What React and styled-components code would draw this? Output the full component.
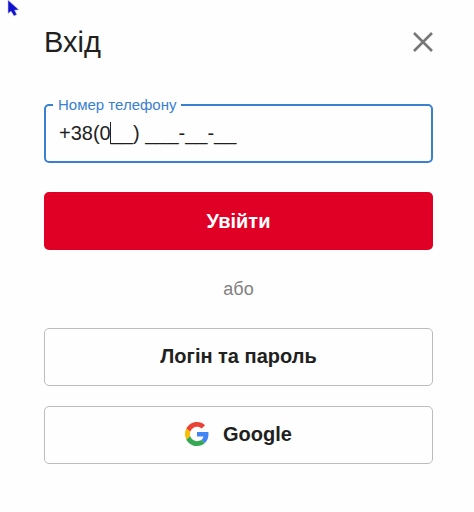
// react imports
import React, { useState } from 'react';
// styled components import
import styled, { createGlobalStyle } from 'styled-components';

// styled components
const GlobalStyle = createGlobalStyle`
  * {
    box-sizing: border-box;
  }

  body {
    margin: 0;
    background-color: #fefefe;
    color: #221f1f;
    font-family: "Liberation Sans", Arial, sans-serif;
  }
`

const LoginContainer = styled.main`
  display: flex;
  flex-flow: column nowrap;
  padding: 24px 41px 48px 44px;
`

const LoginHeader = styled.header`
  display: flex;
  justify-content: space-between;
  align-items: center;
  height: 36px;
  margin-bottom: 36px;
`

const LoginTitle = styled.h1`
  margin: 0;
  font-size: 29px;
  line-height: 36px;
  font-weight: normal;
`

const CloseButton = styled.button`
  display: flex;
  padding: 0;
  border: none;
  background: none;
  color: #777;
  cursor: pointer;
`

const LoginForm = styled.form`
  display: flex;
  flex-flow: column nowrap;
`

const PhoneField = styled.fieldset`
  min-width: 0;
  height: 67px;
  margin: 0 0 29px;
  padding: 0 13px;
  border: 2px solid #3a7fd0;
  border-radius: 5px;
`

const PhoneLegend = styled.legend`
  margin-left: -6px;
  padding: 0 5px;
  color: #3a7fd0;
  font-size: 15px;
  line-height: 18px;
`

const InputWrap = styled.div`
  position: relative;
`

const PhoneInput = styled.input`
  display: block;
  width: 100%;
  height: 38px;
  padding: 0;
  border: none;
  outline: none;
  background: none;
  color: inherit;
  font-family: inherit;
  font-size: 20px;
`

const Caret = styled.span`
  position: absolute;
  top: 8px;
  left: 51px;
  width: 1px;
  height: 22px;
  background-color: #221f1f;
`

const Button = styled.button`
  display: flex;
  justify-content: center;
  align-items: center;
  gap: 14px;
  width: 100%;
  height: 58px;
  padding: ${props => (props.$primary ? '0' : '0 0 2px')};
  border: ${props => (props.$primary ? 'none' : '1px solid #bcbcbc')};
  border-radius: 5px;
  background-color: ${props => (props.$primary ? '#e00025' : '#fefefe')};
  color: ${props => (props.$primary ? '#fff' : '#221f1f')};
  font-family: inherit;
  font-size: 20px;
  font-weight: bold;
  cursor: pointer;
`

const Divider = styled.p`
  margin: 29px 0;
  color: #808080;
  font-size: 18px;
  line-height: 20px;
  text-align: center;
`

const OtherLogins = styled.div`
  display: flex;
  flex-flow: column nowrap;
  gap: 20px;
`

const Pointer = styled.svg`
  position: absolute;
  top: 0;
  left: 7px;
  pointer-events: none;
`

const CloseIcon = () => (
    <svg width="20" height="20" viewBox="0 0 20 20" aria-hidden="true">
        <path d="M1 1L19 19M19 1L1 19" stroke="currentColor" strokeWidth="2.6" />
    </svg>
)

const GoogleIcon = () => (
    <svg width="24" height="24" viewBox="0 0 48 48" aria-hidden="true">
        <path fill="#EA4335" d="M24 9.5c3.54 0 6.71 1.22 9.21 3.6l6.85-6.85C35.9 2.38 30.47 0 24 0 14.62 0 6.51 5.38 2.56 13.22l7.98 6.19C12.43 13.72 17.74 9.5 24 9.5z" />
        <path fill="#4285F4" d="M46.98 24.55c0-1.57-.15-3.09-.38-4.55H24v9.02h12.94c-.58 2.96-2.26 5.48-4.78 7.18l7.73 6c4.51-4.18 7.09-10.36 7.09-17.65z" />
        <path fill="#FBBC05" d="M10.53 28.59c-.48-1.45-.76-2.99-.76-4.59s.27-3.14.76-4.59l-7.98-6.19C.92 16.46 0 20.12 0 24c0 3.88.92 7.54 2.56 10.78l7.97-6.19z" />
        <path fill="#34A853" d="M24 48c6.48 0 11.93-2.13 15.89-5.81l-7.73-6c-2.15 1.45-4.92 2.3-8.16 2.3-6.26 0-11.57-4.22-13.47-9.91l-7.98 6.19C6.51 42.62 14.62 48 24 48z" />
    </svg>
)

const App = () => {
    const [phone, setPhone] = useState('+38(0__) ___-__-__');

    const login = e => {
        e.preventDefault();
    }

    return (
        <>
            <GlobalStyle />
            <LoginContainer>
                <LoginHeader>
                    <LoginTitle>Вхід</LoginTitle>
                    <CloseButton type="button" aria-label="Закрити">
                        <CloseIcon />
                    </CloseButton>
                </LoginHeader>
                <LoginForm onSubmit={login}>
                    <PhoneField>
                        <PhoneLegend>
                            <label htmlFor="phone">Номер телефону</label>
                        </PhoneLegend>
                        <InputWrap>
                            <PhoneInput id="phone" name="phone" type="tel" value={phone} onChange={e => setPhone(e.target.value)} />
                            <Caret />
                        </InputWrap>
                    </PhoneField>
                    <Button type="submit" $primary>Увійти</Button>
                </LoginForm>
                <Divider>або</Divider>
                <OtherLogins>
                    <Button type="button">Логін та пароль</Button>
                    <Button type="button">
                        <GoogleIcon />
                        Google
                    </Button>
                </OtherLogins>
            </LoginContainer>
            <Pointer width="13" height="18" viewBox="0 0 13 18" aria-hidden="true">
                <path d="M1 0V13.5L4 11.2L7 16L9.8 14.6L7.6 10.2L11.8 9.8Z" fill="#1010d0" stroke="#c4c4dc" strokeWidth="0.6" />
            </Pointer>
        </>
    );
};

export default App;
